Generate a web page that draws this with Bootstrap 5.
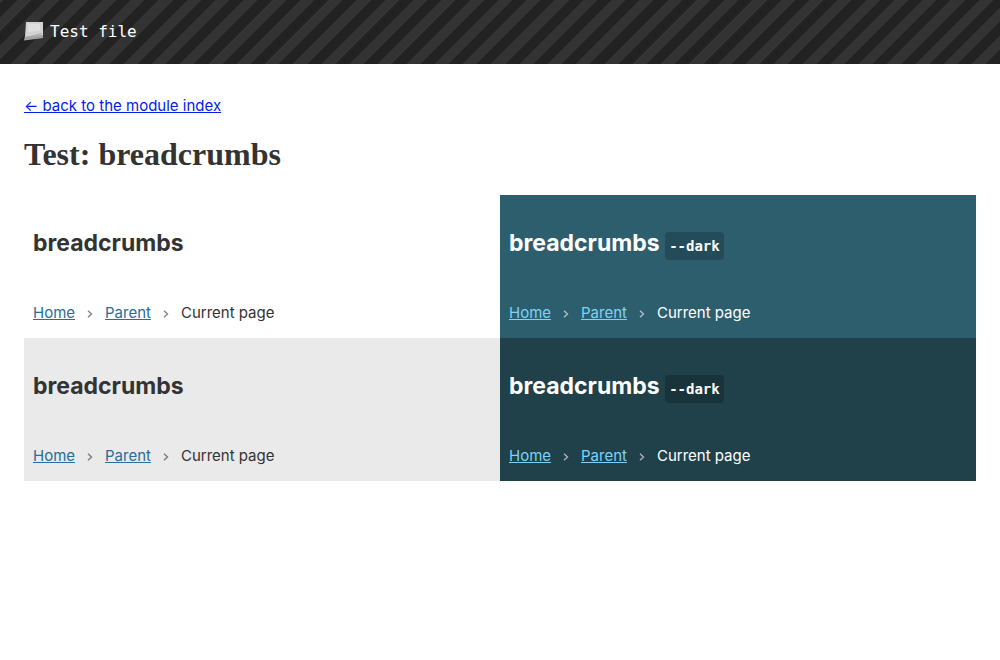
<!DOCTYPE html>
<html lang="en">
<head>
<meta charset="utf-8">
<meta name="viewport" content="width=device-width, initial-scale=1">
<title>Test: breadcrumbs</title>
<link href="https://cdn.jsdelivr.net/npm/bootstrap@5.3.0/dist/css/bootstrap.min.css" rel="stylesheet">
<style>
  body { font-family: Inter, sans-serif; font-size: 15px; line-height: 24px; color: #333; }
  .site-header { height: 64px; background: repeating-linear-gradient(-45deg, #222, #222 10px, #333 10px, #333 20px); }
  .site-title { font: 16px/24px "DejaVu Sans Mono", monospace; color: #fff; gap: 6px; }
  .page-body { padding-top: 30px; }
  .back-link { color: #001ee6; }
  .page-title { font: bold 32px/40px "Liberation Serif", serif; margin: 16px 0 21px; }
  .demo { padding: 32px 9px 13px; --demo-link: #286d96; }
  .demo h2 { font: 700 23px/32px Inter, sans-serif; margin: 0 0 42px; }
  .demo code { font: bold 14px/20px "DejaVu Sans Mono", monospace; color: inherit; background: rgba(0,0,0,.2); border-radius: 4px; padding: 6px 4px; }
  .demo a { color: var(--demo-link); }
  .demo .breadcrumb { margin: 0; gap: 12px; }
  .sep { width: 6px; height: 8px; margin-top: 2px; fill: none; stroke: currentColor; opacity: .6; }
  .demo-gray { background: #eaeaea; }
  .demo-teal, .demo-deep { color: #fff; --demo-link: #7dd3f7; }
  .demo-teal { background: #2d5e6e; }
  .demo-deep { background: #20404a; }
</style>
</head>
<body>
<header class="site-header d-flex align-items-center px-4">
  <div class="site-title d-flex align-items-center">
    <svg width="20" height="20" viewBox="0 0 20 20" aria-hidden="true">
      <path fill="#a8a8a8" d="M1 14l18-1v3L0 18.500z"/>
      <path fill="#d2d2d2" d="M2 0h17v13L1 15z"/>
      <path fill="#dedede" d="M4 2h12v7l-12 1z"/>
      <path fill="none" stroke="#999" stroke-width=".7" d="M1 15.500l5-1 12-3M1 17l17-2"/>
    </svg>
    <span>Test file</span>
  </div>
</header>
<main class="page-body px-4">
  <a class="back-link" href="#">← back to the module index</a>
  <h1 class="page-title">Test: breadcrumbs</h1>
  <div class="row g-0">
    <section class="col-6 demo">
      <h2>breadcrumbs</h2>
      <nav aria-label="Breadcrumb"><div class="breadcrumb align-items-center"><a href="#">Home</a><svg class="sep" viewBox="0 0 6 8"><path stroke-width="1.4" d="M1 .7 4.500 4 1 7.300"/></svg><a href="#">Parent</a><svg class="sep" viewBox="0 0 6 8"><path stroke-width="1.4" d="M1 .7 4.500 4 1 7.300"/></svg><span>Current page</span></div></nav>
    </section>
    <section class="col-6 demo demo-teal">
      <h2>breadcrumbs <code>--dark</code></h2>
      <nav aria-label="Breadcrumb"><div class="breadcrumb align-items-center"><a href="#">Home</a><svg class="sep" viewBox="0 0 6 8"><path stroke-width="1.4" d="M1 .7 4.500 4 1 7.300"/></svg><a href="#">Parent</a><svg class="sep" viewBox="0 0 6 8"><path stroke-width="1.4" d="M1 .7 4.500 4 1 7.300"/></svg><span>Current page</span></div></nav>
    </section>
    <section class="col-6 demo demo-gray">
      <h2>breadcrumbs</h2>
      <nav aria-label="Breadcrumb"><div class="breadcrumb align-items-center"><a href="#">Home</a><svg class="sep" viewBox="0 0 6 8"><path stroke-width="1.4" d="M1 .7 4.500 4 1 7.300"/></svg><a href="#">Parent</a><svg class="sep" viewBox="0 0 6 8"><path stroke-width="1.4" d="M1 .7 4.500 4 1 7.300"/></svg><span>Current page</span></div></nav>
    </section>
    <section class="col-6 demo demo-deep">
      <h2>breadcrumbs <code>--dark</code></h2>
      <nav aria-label="Breadcrumb"><div class="breadcrumb align-items-center"><a href="#">Home</a><svg class="sep" viewBox="0 0 6 8"><path stroke-width="1.4" d="M1 .7 4.500 4 1 7.300"/></svg><a href="#">Parent</a><svg class="sep" viewBox="0 0 6 8"><path stroke-width="1.4" d="M1 .7 4.500 4 1 7.300"/></svg><span>Current page</span></div></nav>
    </section>
  </div>
</main>
<script src="https://cdn.jsdelivr.net/npm/bootstrap@5.3.0/dist/js/bootstrap.bundle.min.js"></script>
</body>
</html>
